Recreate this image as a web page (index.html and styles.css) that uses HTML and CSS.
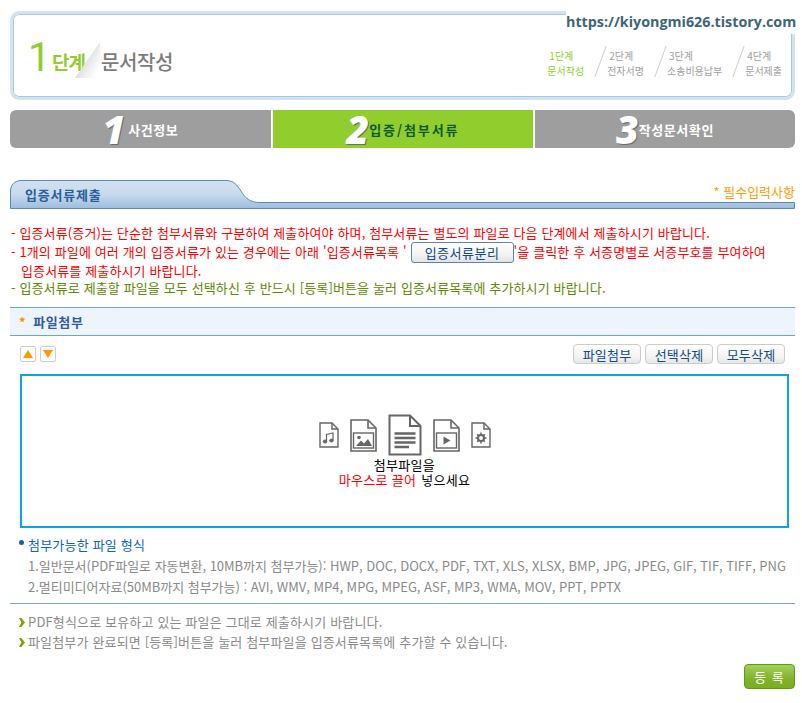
FILE: index.html
```html
<!DOCTYPE html>
<html lang="ko">
<head>
<meta charset="utf-8">
<title>문서작성</title>
<link rel="stylesheet" href="styles.css">
</head>
<body>
<div class="watermark">https://kiyongmi626.tistory.com</div>
<main class="page">
  <header class="head">
    <div class="title">
      <span class="title-num">1</span>
      <span class="title-step">단계</span>
      <svg class="title-slash" width="25" height="36" viewBox="0 0 25 36" aria-hidden="true">
        <defs>
          <linearGradient id="slashfill" x1="0.400" y1="0.400" x2="0.900" y2="0.800">
            <stop offset="0" stop-color="#dcdcdc"/>
            <stop offset="1" stop-color="#fff"/>
          </linearGradient>
        </defs>
        <path d="M25 0L0 36H25Z" fill="url(#slashfill)"/>
      </svg>
      <span class="title-text">문서작성</span>
    </div>
    <ol class="mini-steps">
      <li class="mini on"><span>1단계</span><span>문서작성</span></li>
      <li class="mini"><span>2단계</span><span>전자서명</span></li>
      <li class="mini"><span>3단계</span><span>소송비용납부</span></li>
      <li class="mini"><span>4단계</span><span>문서제출</span></li>
    </ol>
  </header>

  <nav class="steps">
    <div class="step first"><i class="step-num">1</i><span class="step-label">사건정보</span></div>
    <div class="step active"><i class="step-num">2</i><span class="step-label">입증/첨부서류</span></div>
    <div class="step last"><i class="step-num">3</i><span class="step-label">작성문서확인</span></div>
  </nav>

  <section class="tabbar">
    <svg class="tab-bg" width="785" height="30" viewBox="0 0 785 30" preserveAspectRatio="none" aria-hidden="true">
      <defs>
        <linearGradient id="tabfill" x1="0" y1="0" x2="0" y2="1">
          <stop offset="0" stop-color="#d2e1f1"/>
          <stop offset="0.5" stop-color="#c7daed"/>
          <stop offset="1" stop-color="#9dbcdd"/>
        </linearGradient>
      </defs>
      <path d="M.5 28.500V11C.5 5 5 .5 11 .5H216C224 .5 227 5 231 11C235 18 240 22.500 250 22.500H784.500V28.500Z" fill="url(#tabfill)" stroke="#5b8cb8"/>
    </svg>
    <h2 class="tab-title">입증서류제출</h2>
    <span class="required">* 필수입력사항</span>
  </section>

  <div class="notes">
    <p class="red">- 입증서류(증거)는 단순한 첨부서류와 구분하여 제출하여야 하며, 첨부서류는 별도의 파일로 다음 단계에서 제출하시기 바랍니다.</p>
    <p class="red">- 1개의 파일에 여러 개의 입증서류가 있는 경우에는 아래 '입증서류목록 ' <button class="split-btn" type="button">입증서류분리</button>'을 클릭한 후 서증명별로 서증부호를 부여하여</p>
    <p class="red indent">입증서류를 제출하시기 바랍니다.</p>
    <p class="green">- 입증서류로 제출할 파일을 모두 선택하신 후 반드시 [등록]버튼을 눌러 입증서류목록에 추가하시기 바랍니다.</p>
  </div>

  <h3 class="attach-head"><span class="star">*</span>파일첨부</h3>

  <div class="toolbar">
    <div class="arrows">
      <button class="arrow" type="button" aria-label="위로"><svg width="10" height="8" viewBox="0 0 10 8"><path d="M5 0L10 8H0Z" fill="#f90"/></svg></button>
      <button class="arrow" type="button" aria-label="아래로"><svg width="10" height="8" viewBox="0 0 10 8"><path d="M0 0H10L5 8Z" fill="#f90"/></svg></button>
    </div>
    <div class="tool-btns">
      <button class="tool" type="button">파일첨부</button>
      <button class="tool" type="button">선택삭제</button>
      <button class="tool" type="button">모두삭제</button>
    </div>
  </div>

  <div class="dropzone">
    <div class="file-icons">
      <svg width="20" height="26" viewBox="0 0 20 26" fill="none" stroke="#666"><path d="M1 1H13L19 7V25H1Z" stroke-width="1.400"/><path d="M13 1V7H19" stroke-width="1.400"/><path d="M7.500 19V12.500L14 11V18" stroke-width="1.200"/><ellipse cx="6" cy="19.500" rx="1.800" ry="1.500" fill="#666"/><ellipse cx="12.500" cy="18.500" rx="1.800" ry="1.500" fill="#666"/></svg>
      <svg width="27" height="33" viewBox="0 0 27 33" fill="none" stroke="#666"><path d="M1 1H18L26 9V32H1Z" stroke-width="1.600"/><path d="M18 1V9H26" stroke-width="1.600"/><rect x="3.500" y="14" width="20" height="15" stroke-width="1.400"/><circle cx="9" cy="18.500" r="1.800" fill="#666" stroke="none"/><path d="M6 27L11 21.500L14 24.500L18 20L22 27Z" fill="#666" stroke="none"/></svg>
      <svg width="34" height="42" viewBox="0 0 34 42" fill="none" stroke="#666"><path d="M1.500 1.500H22L32.500 12V40.500H1.500Z" stroke-width="2"/><path d="M22 1.500V12H32.500" stroke-width="2"/><path d="M6.500 19.500H27.500M6.500 24H27.500M6.500 28.500H27.500M6.500 33H21" stroke-width="2.400"/></svg>
      <svg width="27" height="33" viewBox="0 0 27 33" fill="none" stroke="#666"><path d="M1 1H18L26 9V32H1Z" stroke-width="1.600"/><path d="M18 1V9H26" stroke-width="1.600"/><rect x="3.500" y="14" width="20" height="15" stroke-width="1.400"/><path d="M10.500 17.500L17.500 21.500L10.500 25.500Z" fill="#666" stroke="none"/></svg>
      <svg width="20" height="26" viewBox="0 0 20 26" fill="none" stroke="#666"><path d="M1 1H13L19 7V25H1Z" stroke-width="1.400"/><path d="M13 1V7H19" stroke-width="1.400"/><circle cx="10" cy="16" r="3" stroke-width="2"/><path d="M10 10.500V12.500M10 19.500V21.500M4.500 16H6.500M13.500 16H15.500M6.200 12.200L7.600 13.600M12.400 18.400L13.800 19.800M6.200 19.800L7.600 18.400M12.400 13.600L13.800 12.200" stroke-width="1.500"/></svg>
    </div>
    <p class="drop-text">첨부파일을<br><em>마우스로 끌어</em> 넣으세요</p>
  </div>

  <div class="formats">
    <h4 class="formats-title">첨부가능한 파일 형식</h4>
    <p>1.일반문서(PDF파일로 자동변환, 10MB까지 첨부가능): HWP, DOC, DOCX, PDF, TXT, XLS, XLSX, BMP, JPG, JPEG, GIF, TIF, TIFF, PNG</p>
    <p>2.멀티미디어자료(50MB까지 첨부가능) : AVI, WMV, MP4, MPG, MPEG, ASF, MP3, WMA, MOV, PPT, PPTX</p>
  </div>

  <ul class="tips">
    <li>PDF형식으로 보유하고 있는 파일은 그대로 제출하시기 바랍니다.</li>
    <li>파일첨부가 완료되면 [등록]버튼을 눌러 첨부파일을 입증서류목록에 추가할 수 있습니다.</li>
  </ul>

  <div class="submit-row"><button class="submit" type="button">등 록</button></div>
</main>
</body>
</html>
```
FILE: styles.css
```css
* { box-sizing: border-box; }
html, body { margin: 0; padding: 0; background: #fff; }
body {
  width: 802px;
  height: 703px;
  overflow: hidden;
  position: relative;
  font-family: "Noto Sans CJK KR", "Noto Sans", sans-serif;
  font-size: 13px;
  color: #333;
}
h2, h3, h4, p, ul, ol { margin: 0; padding: 0; list-style: none; font-weight: normal; }
button { font-family: inherit; padding: 0; cursor: pointer; }

.watermark {
  position: absolute;
  left: 566px;
  top: 10px;
  width: 236px;
  height: 24px;
  background: #fff;
  color: #3f6675;
  font: bold 14.300px/24px "Open Sans", sans-serif;
  white-space: nowrap;
}

.page { width: 785px; margin-left: 10px; padding-top: 11px; }

/* header */
.head {
  height: 89px;
  border: 3px solid #d5e3ee;
  border-radius: 9px;
  box-shadow: inset 0 0 0 1px #a6c9e3;
  display: flex;
  justify-content: space-between;
  align-items: flex-start;
  padding: 24px 10px 0 15px;
}
.title { display: flex; align-items: flex-end; height: 34px; margin-top: 3px; }
.title-num { font: 400 40px/38px "Roboto", sans-serif; color: #92cd2e; width: 24px; height: 34px; margin-bottom: 2px; }
.title-step { font-size: 19px; font-weight: 700; line-height: 26px; color: #92cd2e; letter-spacing: -1px; }
.title-slash { margin: 0 0 -3px -10px; flex: none; }
.title-text { font-size: 20px; line-height: 26px; font-weight: 500; color: #7c7c7c; margin-left: 1px; letter-spacing: -.4px; }

.mini-steps { display: flex; margin-top: 10px; }
.mini {
  display: flex; flex-direction: column; align-items: flex-start;
  font-size: 10px; line-height: 15px; color: #a0a0a0;
  padding-left: 23px; position: relative; white-space: nowrap;
}
.mini span:first-child { padding-left: 2px; }
.mini:first-child { padding-left: 0; }
.mini:not(:first-child)::before {
  content: ""; position: absolute; left: 16px; top: -3px; width: 1px; height: 33px;
  background: #d2d2d2; transform: rotate(20deg);
}
.mini.on { color: #92cd2e; }

/* process nav */
.steps { display: grid; grid-template-columns: 261px 260px 260px; column-gap: 2px; margin-top: 10px; }
.step {
  height: 38px; background: #9e9e9e; color: #fff;
  display: flex; justify-content: center; align-items: center;
}
.step.first { border-radius: 6px 0 0 6px; }
.step.last { border-radius: 0 6px 6px 0; }
.step.active { background: #92cd2e; color: #0b5a2c; }
.step-num { font: italic 800 39px/38px "Open Sans", sans-serif; color: #fff; text-shadow: 1px 1px 0 #6b6b6b; }
.step.first .step-num { margin-right: 3px; }
.step-label { font-size: 13px; font-weight: 700; letter-spacing: .6px; }
.step.active .step-label { letter-spacing: 1.900px; }

/* tab */
.tabbar { position: relative; height: 30px; margin-top: 32px; }
.tab-bg { position: absolute; inset: 0; }
.tab-title {
  position: relative; padding: 7px 0 0 15px;
  font-size: 13px; font-weight: 700; line-height: 16px; color: #2b5c98; letter-spacing: .8px;
}
.required { position: absolute; right: 0; top: 4px; color: #ff9c00; font-size: 13px; line-height: 16px; }

/* notes */
.notes { margin-top: 13px; font-size: 13px; line-height: 19px; }
.notes p { white-space: nowrap; height: 19px; letter-spacing: .13px; margin-left: 1px; }
.notes p.indent { height: 18px; }
.notes p.green { height: 17px; line-height: 17px; }
.red { color: #f00; }
.green { color: #5c8a00; }
.indent { padding-left: 10px; }
.split-btn {
  width: 103px; height: 21px; vertical-align: middle; margin: -2px 0 0;
  background: linear-gradient(#fff, #f0f0f0 70%, #e2e2e2);
  border: 1px solid #5b85ad; border-radius: 3px;
  font-size: 13px; color: #0f4a86; letter-spacing: .5px;
}

/* attach */
.attach-head {
  margin-top: 11px; height: 29px; background: #eef4fb;
  border-top: 1px solid #6fa0e0; border-bottom: 1px solid #6fa0e0;
  padding-left: 9px; font-size: 13px; font-weight: 700; line-height: 27px; color: #2e5aa6;
  letter-spacing: .6px;
}
.star { color: #f39200; margin-right: 7px; }

.toolbar { display: flex; justify-content: space-between; align-items: center; height: 38px; padding: 0 10px 2px; }
.arrows { display: flex; gap: 4px; }
.arrow {
  width: 16px; height: 16px; background: #fff; border: 1px solid #ccc; border-radius: 2px;
  display: flex; align-items: center; justify-content: center;
}
.tool-btns { display: flex; gap: 4px; }
.tool {
  height: 20px; width: 68px;
  background: linear-gradient(#fff, #f2f2f2 70%, #e6e6e6);
  border: 1px solid #ccc; border-radius: 4px;
  font-size: 13px; color: #0f4a86; letter-spacing: .2px;
}
.dropzone {
  margin: 0 6px 0 10px; height: 154px; border: 2px solid #0aa5e2;
  display: flex; flex-direction: column; align-items: center; padding-top: 38px;
}
.file-icons { display: flex; align-items: center; gap: 11px; height: 42px; }
.drop-text { margin-top: 1px; text-align: center; font-size: 13px; line-height: 15px; color: #000; letter-spacing: .3px; }
.drop-text em { font-style: normal; color: #f00; margin-right: 1px; }

.formats { margin-top: 7px; padding-left: 8px; padding-bottom: 6px; border-bottom: 1px solid #7ba3d6; }
.formats-title { font-size: 13px; line-height: 20px; color: #0a64c2; position: relative; padding-left: 10px; letter-spacing: .2px; }
.formats-title::before {
  content: ""; position: absolute; left: 1px; top: 5px; width: 5px; height: 5px; border-radius: 50%; background: #1560a8;
}
.formats p { font-size: 13px; line-height: 21px; color: #8a8a8a; padding-left: 10px; white-space: nowrap; letter-spacing: -.02px; }

.tips { margin-top: 8px; padding-left: 9px; }
.tips li {
  font-size: 13px; line-height: 20px; color: #8a8a8a; padding-left: 9px; position: relative; letter-spacing: .16px;
}
.tips li::before {
  content: ""; position: absolute; left: 0; top: 6px; width: 6px; height: 9px;
  background: #7aa800;
  clip-path: polygon(0 0, 40% 0, 100% 50%, 40% 100%, 0 100%, 40% 50%);
}
.submit-row { display: flex; justify-content: flex-end; margin-top: 12px; }
.submit {
  width: 51px; height: 25px; border: 1px solid #5f9a10; border-radius: 4px;
  background: linear-gradient(#a4cf5e, #7fb42a 60%, #78ae22);
  color: #fff; font-size: 13px; letter-spacing: 1px;
}
```
